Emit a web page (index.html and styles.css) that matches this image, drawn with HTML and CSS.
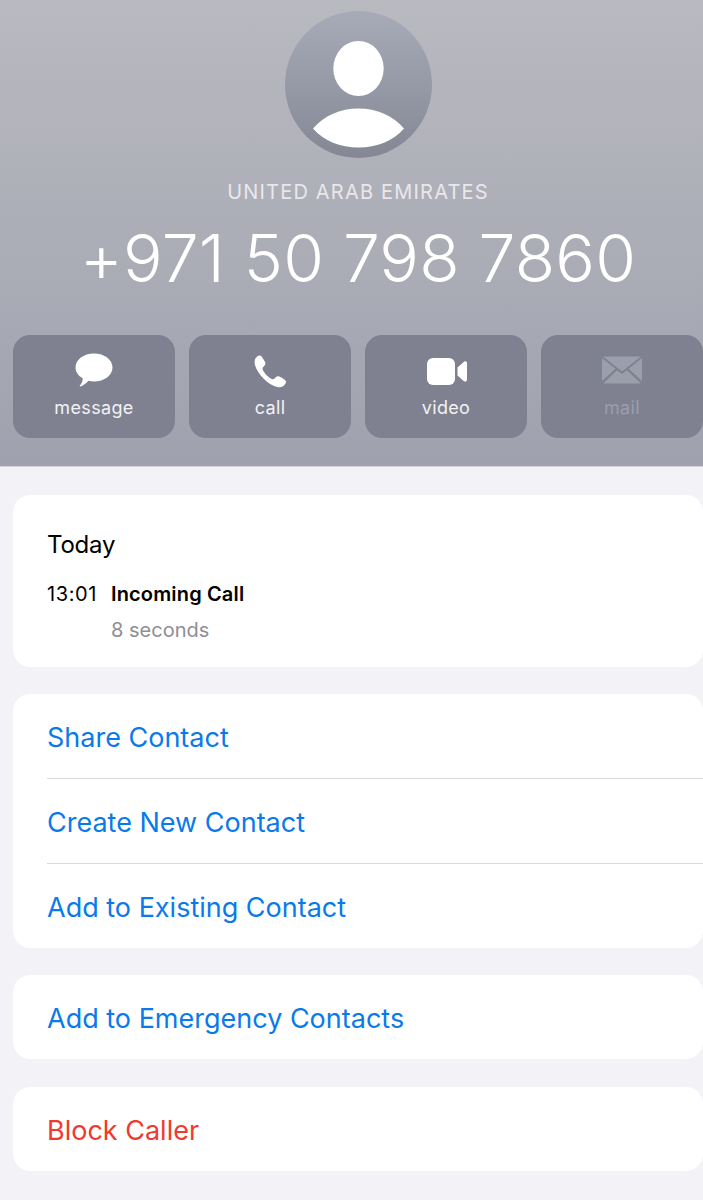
FILE: index.html
```html
<!DOCTYPE html>
<html lang="en">
<head>
<meta charset="utf-8">
<title>Contact</title>
<link rel="stylesheet" href="styles.css">
</head>
<body>
<header class="hero">
  <svg class="avatar" viewBox="0 0 147 147" aria-hidden="true">
    <defs>
      <linearGradient id="av" x1="0" y1="0" x2="0" y2="1">
        <stop offset="0" stop-color="#a7abb8"/>
        <stop offset="1" stop-color="#858894"/>
      </linearGradient>
    </defs>
    <circle cx="73.5" cy="73.5" r="73.5" fill="url(#av)"/>
    <ellipse cx="73.5" cy="57.5" rx="25.2" ry="27.5" fill="#fff"/>
    <path d="M28 117.5C39 104.5 55 97.5 73.5 97.5S108 104.5 119 117.5C108 130 92 136.500 73.500 136.500S39 130 28 117.500Z" fill="#fff"/>
  </svg>
  <div class="country">UNITED ARAB EMIRATES</div>
  <h1 class="number">+971 50 798 7860</h1>
  <div class="actions">
    <div class="action">
      <svg class="icon" viewBox="0 0 40 36" aria-hidden="true"><path d="M20 1.500C30.500 1.500 38.500 7.800 38.500 15.500S30.500 29.500 20 29.500C18 29.500 16.200 29.300 14.500 28.800C12.500 31 9.500 33.500 6.500 34.500C5.800 34.700 5.500 34 6 33.500C7.800 31.500 8.800 28.500 8.700 26.300C4.300 23.800 1.500 19.900 1.500 15.500C1.500 7.800 9.500 1.500 20 1.500Z" fill="#fff"/></svg>
      <span class="label">message</span>
    </div>
    <div class="action">
      <svg class="icon" viewBox="0 0 40 36" aria-hidden="true"><path d="M5.500 6.200C6.700 4.500 8.800 3.200 10 3.500C11 3.700 11.800 4.700 12.800 6.300C13.800 7.900 15 9.800 15.300 10.800C15.600 12 15 13 14.200 14C13.400 15 12.400 15.700 12.500 16.800C12.600 18.200 14.300 20.700 16.400 23C18.600 25.300 21 27 22.600 27.300C23.700 27.500 24.500 26.400 25.500 25.500C26.500 24.600 27.500 24 28.700 24.300C29.800 24.600 31.800 25.800 33.300 26.800C34.800 27.800 35.800 28.600 36 29.700C36.200 31 34.800 33 33 34.200C31.500 35.200 29.500 35.600 27 35C22.500 34 17.700 30.800 13.500 26.500C9.300 22.200 6.200 17.500 5 13C4.400 10.500 4.500 7.800 5.500 6.200Z" fill="#fff"/></svg>
      <span class="label">call</span>
    </div>
    <div class="action">
      <svg class="icon" viewBox="0 0 40 36" aria-hidden="true"><rect x="1" y="6" width="28" height="27" rx="6" fill="#fff"/><path d="M31.500 15.500L38 9.800C39.200 8.800 41 9.500 41 11.200V27.800C41 29.500 39.200 30.200 38 29.200L31.500 23.500Z" fill="#fff"/></svg>
      <span class="label">video</span>
    </div>
    <div class="action is-off">
      <svg class="icon" viewBox="0 0 40 36" aria-hidden="true"><path d="M1 4.500H39L20 19.500Z" fill="#9b9eab"/><path d="M0 6V29L13.500 16.800Z" fill="#9b9eab"/><path d="M40 6V29L26.500 16.800Z" fill="#9b9eab"/><path d="M15 18.200L20 22L25 18.200L38.800 31.500H1.200Z" fill="#9b9eab"/></svg>
      <span class="label">mail</span>
    </div>
  </div>
</header>
<main class="content">
  <section class="card recents">
    <div class="day">Today</div>
    <div class="call-line">
      <span class="time">13:01</span>
      <span class="call-type">Incoming Call</span>
    </div>
    <div class="duration">8 seconds</div>
  </section>
  <section class="card">
    <div class="row">Share Contact</div>
    <div class="row">Create New Contact</div>
    <div class="row">Add to Existing Contact</div>
  </section>
  <section class="card">
    <div class="row">Add to Emergency Contacts</div>
  </section>
  <section class="card block-card">
    <div class="row danger">Block Caller</div>
  </section>
</main>
</body>
</html>
```
FILE: styles.css
```css
* { box-sizing: border-box; }
html, body { margin: 0; padding: 0; }
body {
  width: 703px;
  height: 1200px;
  overflow: hidden;
  background: #f2f2f7;
  font-family: Inter, "Liberation Sans", sans-serif;
  color: #000;
}
.hero {
  height: 467px;
  padding: 11px 0 0 13px;
  display: flex;
  flex-direction: column;
  align-items: center;
  background: linear-gradient(#b9bac0, #9fa1ae);
  border-bottom: 1px solid #d4d4da;
}
.avatar { width: 147px; height: 147px; flex: none; }
.country {
  margin-top: 21px;
  font-size: 20px;
  line-height: 26px;
  letter-spacing: 1.2px;
  color: #e8e8ec;
}
.number {
  margin: 16px 0 0;
  font-size: 66px;
  line-height: 74px;
  font-weight: 300;
  letter-spacing: 0.2px;
  color: #fff;
  white-space: nowrap;
}
.actions {
  margin-top: 40px;
  width: 100%;
  display: grid;
  grid-template-columns: repeat(4, 162px);
  gap: 14px;
}
.action {
  height: 103px;
  padding-top: 17px;
  border-radius: 17px;
  background: #7f8190;
  color: #fff;
  display: flex;
  flex-direction: column;
  align-items: center;
}
.icon { width: 40px; height: 36px; flex: none; overflow: visible; }
.label {
  margin-top: 9px;
  font-size: 18px;
  line-height: 22px;
  letter-spacing: 0.35px;
  color: #f2f2f5;
}
.is-off .label { color: #9b9eab; }
.content {
  padding: 28px 0 0 13px;
  display: flex;
  flex-direction: column;
  gap: 27px;
}
.card {
  background: #fff;
  border-radius: 17px;
  overflow: hidden;
}
.block-card { margin-top: 1px; }
.recents { height: 172px; padding: 33px 34px 0; }
.day { font-size: 24px; line-height: 34px; letter-spacing: -0.2px; }
.call-line {
  margin-top: 18px;
  display: flex;
  align-items: center;
  height: 28px;
}
.time { width: 64px; font-size: 20px; letter-spacing: 0.6px; }
.call-type { font-size: 20px; font-weight: 600; letter-spacing: 0.15px; }
.duration {
  margin: 8px 0 0 64px;
  font-size: 20px;
  line-height: 28px;
  color: #8e8e93;
}
.row {
  height: 85px;
  margin-left: 34px;
  padding-top: 2px;
  display: flex;
  align-items: center;
  font-size: 27px;
  color: #0a7aeb;
  border-bottom: 1px solid #d9d9dc;
}
.row:last-child { height: 84px; border-bottom: 0; }
.danger { color: #f0392f; }
```
